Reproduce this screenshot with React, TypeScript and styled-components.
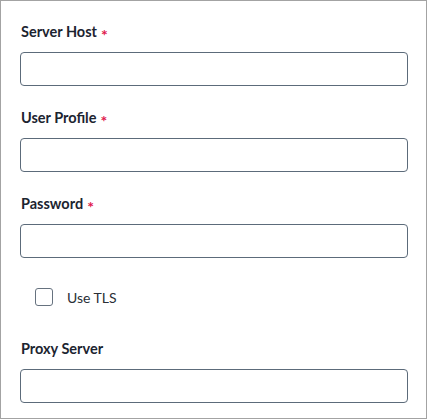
import React from "react";
import styled, { createGlobalStyle } from "styled-components";

const Global = createGlobalStyle`
  html, body { margin: 0; padding: 0; background: #ffffff; }
  * { box-sizing: border-box; }
  body { font-family: Lato, "Open Sans", sans-serif; }
`;

const Panel = styled.div`
  width: 427px;
  height: 419px;
  border: 1px solid #a3a3a3;
  padding: 21px 18px 0 19px;
  display: flex;
  flex-direction: column;
  gap: 22px;
  background: #fff;
`;

const Field = styled.div`
  display: flex;
  flex-direction: column;
  gap: 10px;
`;

const Label = styled.label`
  display: flex;
  align-items: center;
  gap: 4px;
  height: 20px;
  padding-left: 1px;
  font-family: Lato, sans-serif;
  font-weight: 700;
  font-size: 14.5px;
  line-height: 20px;
  color: #1c2430;
`;

const Required = styled.span`
  color: #e0184c;
  font-size: 16px;
  font-weight: 700;
  line-height: 16px;
  margin-top: 6px;
`;

const Input = styled.input`
  width: 100%;
  height: 34px;
  border: 1px solid #5c6b7a;
  border-radius: 4px;
  padding: 0 10px;
  font-family: Lato, sans-serif;
  font-size: 14px;
  background: #fff;
  outline: none;
`;

const CheckRow = styled.label`
  display: flex;
  align-items: center;
  gap: 14px;
  height: 18px;
  margin: 8px 0 11px 15px;
  font-family: Lato, sans-serif;
  font-size: 14px;
  color: #2a2f36;
`;

const Box = styled.span`
  width: 18px;
  height: 18px;
  border: 1px solid #66727f;
  border-radius: 3px;
  background: #fff;
  flex: none;
`;

const fields = [
  { label: "Server Host", required: true },
  { label: "User Profile", required: true },
  { label: "Password", required: true },
];

export default function App() {
  return (
    <>
      <Global />
      <Panel>
        {fields.map((f) => (
          <Field key={f.label}>
            <Label>
              {f.label}
              {f.required && <Required>*</Required>}
            </Label>
            <Input type={f.label === "Password" ? "password" : "text"} />
          </Field>
        ))}
        <CheckRow>
          <Box />
          Use TLS
        </CheckRow>
        <Field>
          <Label>Proxy Server</Label>
          <Input type="text" />
        </Field>
      </Panel>
    </>
  );
}
